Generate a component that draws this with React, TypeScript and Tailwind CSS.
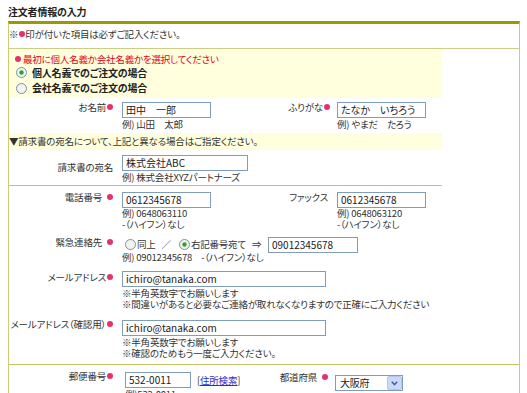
import React from "react";

// Small pink "required" mark that follows a label
function Dot({ spaced }: { spaced?: boolean }) {
  return (
    <span
      className={`inline-block w-[6px] h-[6px] rounded-full bg-[#e6326a] relative -top-[1px] ${
        spaced ? "ml-[5px]" : "ml-[1px]"
      }`}
    />
  );
}

function Radio({ checked }: { checked?: boolean }) {
  return (
    <svg width="11" height="11" viewBox="0 0 11 11" className="shrink-0">
      <circle cx="5.5" cy="5.5" r="5" fill="#f3f3ee" stroke="#7c90a9" />
      {checked && <circle cx="5.5" cy="5.5" r="2.2" fill="#2ea42e" />}
    </svg>
  );
}

function Field({ value, w }: { value: string; w: string }) {
  return (
    <div
      className={`${w} h-[16px] shrink-0 border border-[#7f9db9] bg-white px-[3px] text-[10px] tracking-normal leading-[14px] text-[#222] whitespace-nowrap overflow-hidden`}
    >
      {value}
    </div>
  );
}

function Select({ value }: { value: string }) {
  return (
    <div className="w-[68px] h-[16px] border border-[#7f9db9] bg-white flex items-center">
      <span className="flex-1 pl-[4px] text-[10px] leading-[14px] text-[#222]">{value}</span>
      <span className="w-[15px] h-[14px] bg-[#c9d8fc] border border-[#b2c6f4] rounded-[2px] flex items-center justify-center">
        <svg width="7" height="5" viewBox="0 0 7 5">
          <path d="M0.8 0.8 L3.5 3.6 L6.2 0.8" fill="none" stroke="#4d6185" strokeWidth="1.5" />
        </svg>
      </span>
    </div>
  );
}

export default function App() {
  return (
    <div className="w-[527px] h-[393px] overflow-hidden bg-white font-['Noto_Sans_CJK_JP',sans-serif] [font-feature-settings:'palt'] text-[9.5px] tracking-[-0.2px] leading-[12px] text-[#333]">
      {/* Heading */}
      <div className="h-[21px] pl-[8px] pt-[5px] text-[10px] font-bold leading-[14px] text-[#222]">
        注文者情報の入力
      </div>

      {/* Form box */}
      <div className="ml-[8px] w-[512px] h-[380px] border-t-[3px] border-x border-t-[#999900] border-x-[#cccc77]">
        <div className="h-[25px] border-b border-[#cccc88] pt-[4px]">
          ※<Dot />印が付いた項目は必ずご記入ください。
        </div>

        {/* Name type */}
        <div className="w-[433px] bg-[#ffffdd] pt-[4px] pb-[2px]">
          <div className="pl-[6px] text-[#e60012] flex items-center">
            <span className="inline-block w-[6px] h-[6px] rounded-full bg-[#e6326a] mr-[2px]" />
            最初に個人名義か会社名義かを選択してください
          </div>
          <div className="h-[15px] flex items-center pl-[7px] gap-[5px] text-[10px] font-bold text-[#222]">
            <Radio checked />
            個人名義でのご注文の場合
          </div>
          <div className="h-[16px] flex items-center pl-[7px] gap-[5px] text-[10px] font-bold text-[#222]">
            <Radio />
            会社名義でのご注文の場合
          </div>
        </div>

        {/* Name */}
        <div className="flex h-[35px] pt-[3px]">
          <div className="w-[108px] pr-[4px] text-right">
            お名前<Dot />
          </div>
          <div className="ml-[5px] w-[140px] pt-[1px] leading-[11px]">
            <Field value="田中　一郎" w="w-[89px]" />
            <div className="pt-[1px]">例) 山田　太郎</div>
          </div>
          <div className="w-[70px] pr-[2px] text-right">
            ふりがな<Dot />
          </div>
          <div className="ml-[5px] pt-[1px] leading-[11px]">
            <Field value="たなか　いちろう" w="w-[89px]" />
            <div className="pt-[1px]">例) やまだ　たろう</div>
          </div>
        </div>

        <div className="w-[433px] h-[17px] bg-[#ffffdd] pt-[2px]">
          ▼請求書の宛名について、上記と異なる場合はご指定ください。
        </div>

        {/* Billing name */}
        <div className="w-[433px] h-[36px] border-b border-[#c4c466] flex">
          <div className="w-[108px] pr-[4px] pt-[11px] text-right">請求書の宛名</div>
          <div className="ml-[5px] pt-[5px] leading-[11px]">
            <Field value="株式会社ABC" w="w-[126px]" />
            <div className="pt-[1px]">例) 株式会社XYZパートナーズ</div>
          </div>
        </div>

        {/* Phone / fax */}
        <div className="flex h-[48px]">
          <div className="w-[108px] pr-[4px] pt-[5px] text-right">
            電話番号<Dot spaced />
          </div>
          <div className="ml-[5px] w-[140px] pt-[6px] leading-[11px]">
            <Field value="0612345678" w="w-[89px]" />
            <div>例) 0648063110</div>
            <div>-（ハイフン）なし</div>
          </div>
          <div className="w-[70px] pr-[4px] pt-[5px] text-right">ファックス</div>
          <div className="ml-[5px] pt-[6px] leading-[11px]">
            <Field value="0612345678" w="w-[89px]" />
            <div>例) 0648063120</div>
            <div>-（ハイフン）なし</div>
          </div>
        </div>

        {/* Emergency contact */}
        <div className="flex h-[32px]">
          <div className="w-[108px] pr-[4px] pt-[2px] text-right">
            緊急連絡先<Dot spaced />
          </div>
          <div className="ml-[5px] pt-[3px] leading-[11px]">
            <div className="flex items-center h-[15px]">
              <div className="w-[146px] shrink-0 flex items-center whitespace-nowrap">
                <span className="ml-[3px] shrink-0">
                  <Radio />
                </span>
                <span className="ml-[1px] shrink-0">同上</span>
                <span className="ml-[6px] shrink-0">／</span>
                <span className="ml-[8px] shrink-0">
                  <Radio checked />
                </span>
                <span className="ml-[1px] shrink-0">右記番号宛て</span>
                <span className="ml-[6px] shrink-0">⇒</span>
              </div>
              <Field value="09012345678" w="w-[90px]" />
            </div>
            <div className="whitespace-nowrap">例) 09012345678　-（ハイフン）なし</div>
          </div>
        </div>

        {/* Email */}
        <div className="flex h-[48px]">
          <div className="w-[108px] pr-[4px] pt-[5px] text-right">
            メールアドレス<Dot />
          </div>
          <div className="ml-[5px] pt-[5px] leading-[11px]">
            <Field value="ichiro@tanaka.com" w="w-[204px]" />
            <div className="pt-[1px]">※半角英数字でお願いします</div>
            <div>※間違いがあると必要なご連絡が取れなくなりますので正確にご入力ください</div>
          </div>
        </div>

        {/* Email confirm */}
        <div className="flex h-[51px] border-b border-[#c4c466]">
          <div className="w-[108px] pr-[4px] pt-[4px] text-right whitespace-nowrap">
            メールアドレス（確認用）<Dot />
          </div>
          <div className="ml-[5px] pt-[6px] leading-[11px]">
            <Field value="ichiro@tanaka.com" w="w-[204px]" />
            <div className="pt-[1px]">※半角英数字でお願いします</div>
            <div>※確認のためもう一度ご入力ください。</div>
          </div>
        </div>

        {/* Postal / prefecture */}
        <div className="flex h-[40px]">
          <div className="w-[108px] pr-[4px] pt-[5px] text-right">
            郵便番号<Dot />
          </div>
          <div className="ml-[8px] w-[137px] pt-[7px] leading-[11px]">
            <div className="flex items-center">
              <Field value="532-0011" w="w-[66px]" />
              <span className="ml-[6px]">
                [<span className="text-[#1a33cc] underline">住所検索</span>]
              </span>
            </div>
            <div className="pt-[1px]">例)532-0011</div>
          </div>
          <div className="w-[70px] pr-[4px] pt-[6px] text-right">
            都道府県<Dot spaced />
          </div>
          <div className="ml-[3px] pt-[10px]">
            <Select value="大阪府" />
          </div>
        </div>
      </div>
    </div>
  );
}
